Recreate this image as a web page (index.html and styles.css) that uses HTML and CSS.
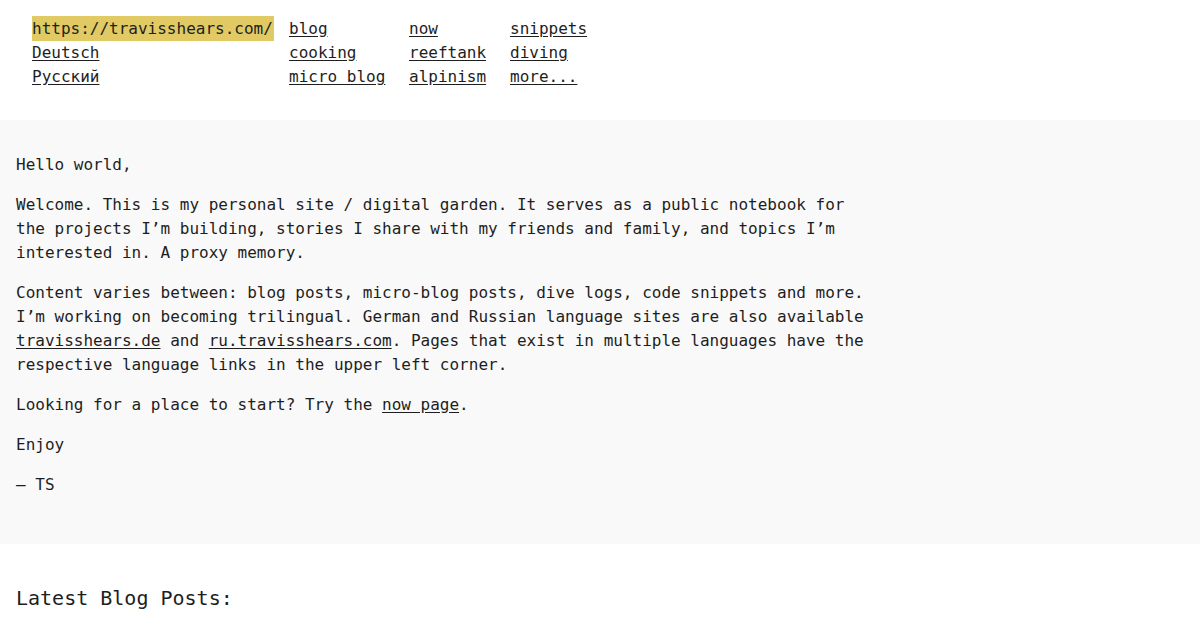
FILE: index.html
```html
<!DOCTYPE html>
<html lang="en">
<head>
<meta charset="utf-8">
<title>Travis Shears</title>
<link rel="stylesheet" href="styles.css">
</head>
<body>
<header class="site-header">
  <nav class="nav-grid">
    <div class="nav-col nav-col-lang">
      <span class="current-url">https://travisshears.com/</span>
      <a href="#">Deutsch</a>
      <a href="#">Русский</a>
    </div>
    <div class="nav-col nav-col-a">
      <a href="#">blog</a>
      <a href="#">cooking</a>
      <a href="#">micro blog</a>
    </div>
    <div class="nav-col nav-col-b">
      <a href="#">now</a>
      <a href="#">reeftank</a>
      <a href="#">alpinism</a>
    </div>
    <div class="nav-col nav-col-c">
      <a href="#">snippets</a>
      <a href="#">diving</a>
      <a href="#">more...</a>
    </div>
  </nav>
</header>
<main>
  <section class="intro">
    <p>Hello world,</p>
    <p>Welcome. This is my personal site / digital garden. It serves as a public notebook for<br>the projects I’m building, stories I share with my friends and family, and topics I’m<br>interested in. A proxy memory.</p>
    <p>Content varies between: blog posts, micro-blog posts, dive logs, code snippets and more.<br>I’m working on becoming trilingual. German and Russian language sites are also available<br><a href="#">travisshears.de</a> and <a href="#">ru.travisshears.com</a>. Pages that exist in multiple languages have the<br>respective language links in the upper left corner.</p>
    <p>Looking for a place to start? Try the <a href="#">now page</a>.</p>
    <p>Enjoy</p>
    <p>– TS</p>
  </section>
  <section class="latest">
    <h2 class="latest-title">Latest Blog Posts:</h2>
  </section>
</main>
</body>
</html>
```

FILE: styles.css
```css
html, body {
  margin: 0;
  padding: 0;
  background: #ffffff;
}

body {
  font-family: "DejaVu Sans Mono", "Liberation Mono", monospace;
  font-size: 16px;
  line-height: 24px;
  color: #1e1e1e;
  overflow: hidden;
}

a {
  color: #1e1e1e;
  text-decoration: underline;
  text-underline-offset: 2px;
}

.site-header {
  padding: 16px 0 32px 32px;
}

.nav-grid {
  display: grid;
  grid-template-columns: 257px 120px 101px auto;
}

.nav-col {
  display: flex;
  flex-direction: column;
  align-items: flex-start;
}

.nav-col > a,
.nav-col > span {
  padding-top: 1px;
  margin-bottom: -1px;
}

.current-url {
  background: #e1ca63;
  padding-right: 1px;
}

.intro {
  background: #f9f9f9;
  padding: 33px 16px 31px;
}

.intro p {
  margin: 0 0 16px;
}

.latest {
  padding: 0 16px;
}

.latest-title {
  margin: 39px 0 0;
  font-size: 20px;
  line-height: 30px;
  font-weight: normal;
}
```
